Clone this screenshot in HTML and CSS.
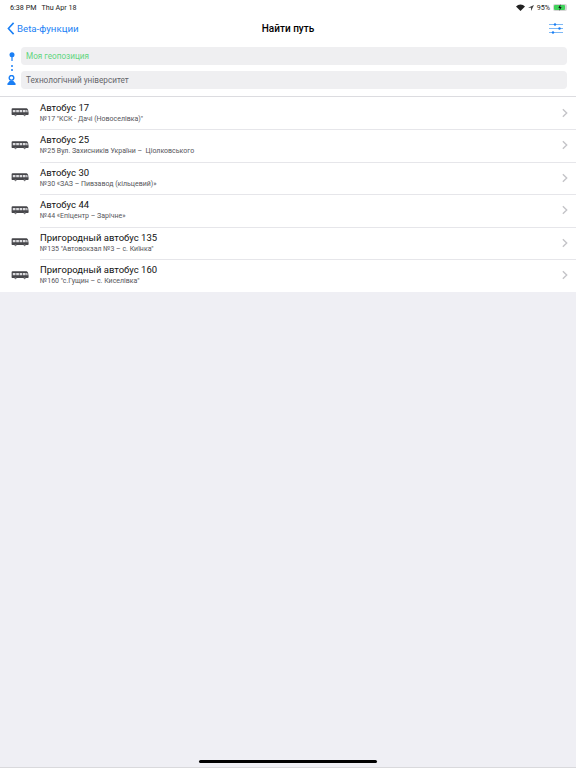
FILE: index.html
```html
<!DOCTYPE html>
<html lang="uk">
<head>
<meta charset="utf-8">
<title>Найти путь</title>
<link rel="stylesheet" href="styles.css">
</head>
<body>
<svg width="0" height="0" class="defs">
  <symbol id="bus" viewBox="0 0 18 9">
    <path d="M.6 1.200C.6 .6 1 .3 1.600 .3h13.400c1 0 1.800.6 2.100 1.600l.5 3v1.300c0 .5-.3.8-.8.8H1.200c-.4 0-.6-.3-.6-.7z" fill="#47474b"/>
    <path d="M1.800 2h2.700v2.200H1.800zM5.200 2h2.700v2.200H5.200zM8.600 2h2.700v2.200H8.600zM12 2h2.600v2.200H12zM15.200 2h1.100l.4 2.200h-1.500z" fill="#dcdcdf"/>
    <circle cx="4.500" cy="7.300" r="1" fill="#77777b"/>
    <circle cx="13.600" cy="7.300" r="1" fill="#77777b"/>
  </symbol>
  <symbol id="chev" viewBox="0 0 7 11">
    <path d="M1 1l4.500 4.500L1 10" fill="none" stroke="#c4c4c8" stroke-width="1.600"/>
  </symbol>
</svg>
<div class="screen">
  <header class="status">
    <div class="status-left"><span>6:38 PM</span><span>Thu Apr 18</span></div>
    <div class="status-right">
      <svg class="wifi" viewBox="0 0 12 9" width="9" height="7"><path d="M6 9L0 3a8.500 8.500 0 0 1 12 0z" fill="#222"/></svg>
      <svg class="loc" viewBox="0 0 8 8" width="6" height="6"><path d="M8 0L0 3.600h4V8z" fill="#444"/></svg>
      <span>95%</span>
      <span class="battery">
        <span class="battery-fill"></span>
        <svg class="bolt" viewBox="0 0 4 7" width="4" height="7"><path d="M2.600 0L.4 3.900h1.400L1.300 7l2.300-4H2.200z" fill="#111"/></svg>
      </span>
    </div>
  </header>
  <nav class="nav">
    <a class="back">
      <svg viewBox="0 0 9 15" width="8" height="13"><path d="M7.500 1L1.500 7.500l6 6.500" fill="none" stroke="#1a7ff5" stroke-width="1.800"/></svg>
      <span>Beta-функции</span>
    </a>
    <h1 class="title">Найти путь</h1>
    <svg class="filters" viewBox="0 0 14 11" width="14" height="11">
      <path d="M0 1.500h14M0 5.500h14M0 9.500h14" stroke="#7db8f5" stroke-width="1"/>
      <circle cx="6" cy="1.500" r="1.200" fill="#1a7ff5"/><circle cx="10.500" cy="5.500" r="1.200" fill="#1a7ff5"/><circle cx="4" cy="9.500" r="1.200" fill="#1a7ff5"/>
    </svg>
  </nav>
  <section class="route">
    <div class="route-icons">
      <svg viewBox="0 0 6 9" width="6" height="9"><circle cx="3" cy="2.700" r="2.500" fill="#1a7ff5"/><rect x="2.400" y="4" width="1.200" height="5" fill="#1a7ff5"/></svg>
      <span class="dots"><i></i><i></i></span>
      <svg viewBox="0 0 9 10" width="9" height="10"><circle cx="4.500" cy="2.800" r="2.300" fill="none" stroke="#1a7ff5" stroke-width="1.400"/><path d="M3 5.500h3L8.500 8.500c.6.900 0 1.500-.8 1.500H1.300c-.8 0-1.400-.6-.8-1.500z" fill="#1a7ff5"/></svg>
    </div>
    <div class="route-fields">
      <div class="field field-from">Моя геопозиция</div>
      <div class="field">Технологічний університет</div>
    </div>
  </section>
  <ul class="list">
    <li class="row"><svg class="bus"><use href="#bus"/></svg><div class="row-text"><div class="row-title">Автобус 17</div><div class="row-sub">№17 "КСК - Дачі (Новоселівка)"</div></div><svg class="chev"><use href="#chev"/></svg></li>
    <li class="row"><svg class="bus"><use href="#bus"/></svg><div class="row-text"><div class="row-title">Автобус 25</div><div class="row-sub">№25 Вул. Захисників України –  Ціолковського</div></div><svg class="chev"><use href="#chev"/></svg></li>
    <li class="row"><svg class="bus"><use href="#bus"/></svg><div class="row-text"><div class="row-title">Автобус 30</div><div class="row-sub">№30 «ЗАЗ – Пивзавод (кільцевий)»</div></div><svg class="chev"><use href="#chev"/></svg></li>
    <li class="row"><svg class="bus"><use href="#bus"/></svg><div class="row-text"><div class="row-title">Автобус 44</div><div class="row-sub">№44 «Епіцентр – Зарічне»</div></div><svg class="chev"><use href="#chev"/></svg></li>
    <li class="row"><svg class="bus"><use href="#bus"/></svg><div class="row-text"><div class="row-title">Пригородный автобус 135</div><div class="row-sub">№135 "Автовокзал №3 – с. Киїнка"</div></div><svg class="chev"><use href="#chev"/></svg></li>
    <li class="row"><svg class="bus"><use href="#bus"/></svg><div class="row-text"><div class="row-title">Пригородный автобус 160</div><div class="row-sub">№160 "с.Гущин – с. Киселівка"</div></div><svg class="chev"><use href="#chev"/></svg></li>
  </ul>
  <div class="home-area"><span class="home-bar"></span></div>
</div>
</body>
</html>
```
FILE: styles.css
```css
* { box-sizing: border-box; }
html, body { margin: 0; padding: 0; height: 100%; }
body { font-family: "Roboto", "Liberation Sans", Arial, sans-serif; background: #efeff4; color: #000; overflow: hidden; }
.defs { display: block; height: 0; }
.screen { height: 768px; display: flex; flex-direction: column; }

.status { height: 14px; background: #fff; display: flex; justify-content: space-between; align-items: flex-end; padding: 0 9px 2px 10px; font-size: 7.200px; color: #222; }
.status-left { display: flex; gap: 5px; }
.status-right { display: flex; align-items: center; gap: 3px; }
.battery { width: 14px; height: 7px; border-radius: 2px; background: #d6d6d6; padding: 1px; display: block; position: relative; }
.battery-fill { display: block; height: 100%; width: 90%; background: #3fd35a; border-radius: 1px; }
.bolt { position: absolute; left: 5px; top: 0; }

.nav { height: 29px; background: #fff; display: flex; align-items: center; justify-content: space-between; position: relative; padding: 0 13px 0 7px; }
.back { display: flex; align-items: center; gap: 2px; color: #1a7ff5; font-size: 9.700px; }
.title { position: absolute; left: 0; right: 0; margin: 0; text-align: center; font-size: 10px; font-weight: 500; pointer-events: none; }

.route { height: 52.500px; background: #fff; display: flex; padding: 4px 9px 6px 7px; gap: 5px; }
.route-icons { width: 9px; display: flex; flex-direction: column; align-items: center; justify-content: space-between; padding: 5px 0 5px; }
.dots { display: flex; flex-direction: column; gap: 2px; }
.dots i { display: block; width: 2px; height: 2px; border-radius: 50%; background: #1a7ff5; }
.route-fields { flex: 1; display: flex; flex-direction: column; gap: 6px; }
.field { height: 18px; border-radius: 4px; background: #efeff1; display: flex; align-items: center; padding-left: 5px; font-size: 8.200px; color: #66666b; }
.field-from { color: #62d67e; }

.list { list-style: none; margin: 0; padding: 0; background: #fff; border-top: 1px solid #dcdce0; }
.row { height: 32.500px; display: flex; align-items: center; padding: 0 8px 0 11px; position: relative; }
.row + .row::before { content: ""; position: absolute; top: 0; left: 40px; right: 0; height: 1px; background: #e6e6ea; }
.bus { width: 18px; height: 9px; flex: none; }
.row-text { flex: 1; margin-left: 11px; min-width: 0; }
.row-title { font-size: 9.500px; line-height: 12px; color: #111; }
.row-sub { font-size: 7px; line-height: 10px; color: #55555a; white-space: pre; }
.chev { width: 6px; height: 10px; flex: none; }

.home-area { flex: 1; display: flex; align-items: flex-end; justify-content: center; padding-bottom: 4px; border-bottom: 1px solid #d9d9dc; }
.home-bar { width: 178px; height: 3px; border-radius: 2px; background: #000; }
```
